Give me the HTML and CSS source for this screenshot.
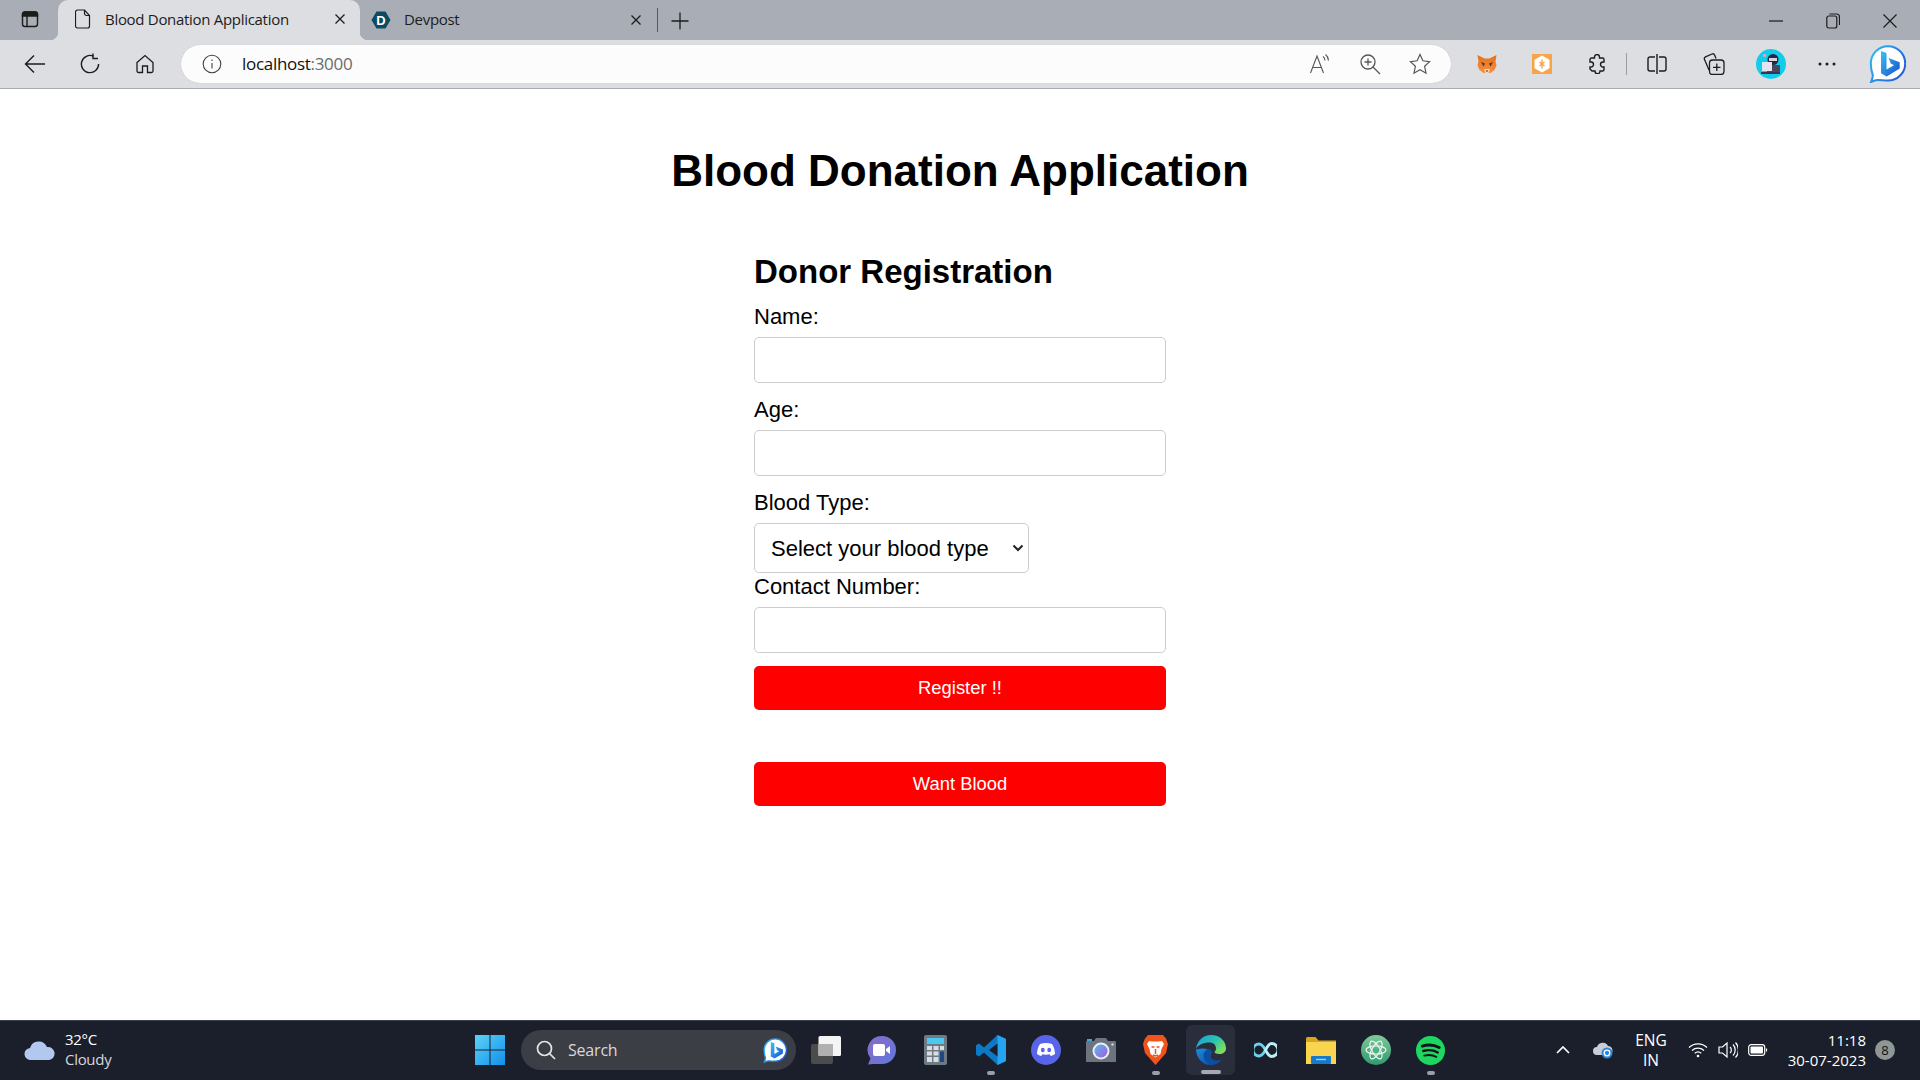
FILE: index.html
```html
<!DOCTYPE html>
<html lang="en">
<head>
  <meta charset="UTF-8">
  <meta name="viewport" content="width=device-width, initial-scale=1.0">
  <title>Blood Donation Application</title>
  <link rel="stylesheet" href="styles.css">
</head>
<body>
  <!-- shared icon parts -->
  <svg class="svg-defs" width="0" height="0">
    <defs>
      <linearGradient id="bing-b" x1="0" y1="0" x2="1" y2="1">
        <stop offset="0" stop-color="#37c3f2"/>
        <stop offset="1" stop-color="#1a4fd0"/>
      </linearGradient>
      <linearGradient id="bing-ring" x1="0" y1="0" x2="1" y2="0.6">
        <stop offset="0" stop-color="#2fc0f5"/>
        <stop offset="1" stop-color="#1f5fdc"/>
      </linearGradient>
      <linearGradient id="chat-bg" x1="0" y1="0" x2="1" y2="1">
        <stop offset="0" stop-color="#8a6cc8"/>
        <stop offset="1" stop-color="#5f78dc"/>
      </linearGradient>
      <linearGradient id="lens-bg" x1="0" y1="0" x2="1" y2="1">
        <stop offset="0" stop-color="#5fb6ee"/>
        <stop offset="1" stop-color="#a05be0"/>
      </linearGradient>
      <linearGradient id="edge-top" x1="0" y1="0" x2="1" y2="0.6">
        <stop offset="0" stop-color="#1b9de2"/>
        <stop offset="0.6" stop-color="#2cc2b0"/>
        <stop offset="1" stop-color="#7fdc5a"/>
      </linearGradient>
      <linearGradient id="edge-low" x1="0" y1="0" x2="1" y2="1">
        <stop offset="0" stop-color="#1a8fe0"/>
        <stop offset="1" stop-color="#0b3f96"/>
      </linearGradient>
      <linearGradient id="atom-bg" x1="0" y1="0" x2="0" y2="1">
        <stop offset="0" stop-color="#7fc99a"/>
        <stop offset="1" stop-color="#2f9a70"/>
      </linearGradient>
      <linearGradient id="win-bg" x1="0" y1="0" x2="1" y2="1">
        <stop offset="0" stop-color="#5ed2f7"/>
        <stop offset="1" stop-color="#1090ea"/>
      </linearGradient>
      <linearGradient id="fox-bg" x1="0" y1="0" x2="0" y2="1">
        <stop offset="0" stop-color="#e2701c"/>
        <stop offset="1" stop-color="#f59042"/>
      </linearGradient>
      <symbol id="bing-logo" viewBox="0 0 37 38">
        <path d="M19 1.200a17.200 17.200 0 0 1 0 34.400c-3.500 0-7.500-.6-10.500-.6-2.500 0-5 1.300-6.500 2 .8-1.800 1.800-4 1.800-6.800C2.500 26.500 1.800 23 1.800 18.400A17.200 17.200 0 0 1 19 1.200z" fill="#fff" stroke="url(#bing-ring)" stroke-width="2"/>
        <path d="M12 6l5.500 2v16.500l7.500-4.300-3.300-1.700-2-5.500 11 4.300v6.200l-13 8-5.700-3.200z" fill="url(#bing-b)"/>
      </symbol>
    </defs>
  </svg>

  <!-- browser tabs -->
  <div class="tab-strip">
    <div class="strip-btn">
      <svg width="20" height="20" viewBox="0 0 20 20" fill="none" stroke="#1c1c1c" stroke-width="1.400"><rect x="2.500" y="3" width="15" height="14.500" rx="2.500"/><path d="M2.500 5.500a2.500 2.500 0 0 1 2.500-2.500h10a2.500 2.500 0 0 1 2.500 2.500V7h-15z" fill="#1c1c1c"/><path d="M7 7v10"/></svg>
    </div>
    <div class="tab active">
      <svg class="tab-icon" width="16" height="20" viewBox="0 0 16 20" fill="none" stroke="#1c1c1c" stroke-width="1.200"><path d="M2.500 1h7l5 5.500v10.500a2 2 0 0 1-2 2h-10a2 2 0 0 1-2-2V3a2 2 0 0 1 2-2z"/><path d="M9.500 1v3.500a2 2 0 0 0 2 2h3"/></svg>
      <span class="tab-title">Blood Donation Application</span>
      <svg class="tab-close" width="12" height="12" viewBox="0 0 12 12" stroke="#1c1c1c" stroke-width="1.300"><path d="M1.500 1.500l9 9M10.500 1.500l-9 9"/></svg>
    </div>
    <div class="tab">
      <svg class="tab-icon" width="20" height="20" viewBox="0 0 20 20"><path d="M5.500 1.500h9L19.500 10l-5 8.500h-9L.5 10z" fill="#0f4a5f"/><text x="10" y="14.500" text-anchor="middle" class="fav-letter">D</text></svg>
      <span class="tab-title">Devpost</span>
      <svg class="tab-close" width="12" height="12" viewBox="0 0 12 12" stroke="#1c1c1c" stroke-width="1.300"><path d="M1.500 1.500l9 9M10.500 1.500l-9 9"/></svg>
    </div>
    <div class="tab-sep"></div>
    <div class="new-tab">
      <svg width="18" height="18" viewBox="0 0 18 18" stroke="#1c1c1c" stroke-width="1.300"><path d="M9 .5v17M.5 9h17"/></svg>
    </div>
    <div class="window-btns">
      <svg width="14" height="14" viewBox="0 0 14 14" stroke="#1c1c1c" stroke-width="1.200"><path d="M0 7h14"/></svg>
      <svg width="14" height="16" viewBox="0 0 14 16" fill="none" stroke="#1c1c1c" stroke-width="1.200"><rect x=".8" y="3" width="10" height="12" rx="2"/><path d="M3.500 1h7a3 3 0 0 1 3 3v8"/></svg>
      <svg width="14" height="14" viewBox="0 0 14 14" stroke="#1c1c1c" stroke-width="1.200"><path d="M.5.5l13 13M13.500.5l-13 13"/></svg>
    </div>
  </div>

  <!-- address bar row -->
  <div class="toolbar">
    <div class="nav-btn">
      <svg width="22" height="20" viewBox="0 0 22 20" fill="none" stroke="#1c1c1c" stroke-width="1.400"><path d="M21 10H2M10 1.500L1.500 10l8.500 8.500"/></svg>
    </div>
    <div class="nav-btn">
      <svg width="20" height="22" viewBox="0 0 20 22" fill="none" stroke="#1c1c1c" stroke-width="1.400"><path d="M13.500 3.200A8.600 8.600 0 1 0 18.600 11"/><path d="M13 .5v5h5"/></svg>
    </div>
    <div class="nav-btn">
      <svg width="20" height="20" viewBox="0 0 20 20" fill="none" stroke="#1c1c1c" stroke-width="1.300"><path d="M2 8.500L10 1.500l8 7V17a1.500 1.500 0 0 1-1.500 1.500h-4V12h-5v6.500h-4A1.500 1.500 0 0 1 2 17z"/></svg>
    </div>
    <div class="address-bar">
      <svg class="info-icon" width="20" height="20" viewBox="0 0 20 20" fill="none" stroke="#444" stroke-width="1.100"><circle cx="10" cy="10" r="8.800"/><path d="M10 9v5.500M10 5.500v1.500"/></svg>
      <span class="url">localhost<span class="url-port">:3000</span></span>
      <div class="address-icons">
        <svg width="22" height="22" viewBox="0 0 22 22" fill="none" stroke="#555" stroke-width="1.100"><path d="M1.500 20L8 3l6.500 17M3.800 14.500h8.500"/><path d="M14 3.500a5 5 0 0 1 2 4M16.500 1.500a8 8 0 0 1 3 6"/></svg>
        <svg width="22" height="22" viewBox="0 0 22 22" fill="none" stroke="#555" stroke-width="1.300"><circle cx="9" cy="9" r="7"/><path d="M14 14l7 7M5.500 9h7M9 5.500v7"/></svg>
        <svg width="22" height="22" viewBox="0 0 22 22" fill="none" stroke="#555" stroke-width="1.200"><path d="M11 1.500l2.900 6.300 6.700.8-5 4.700 1.400 6.900L11 16.800l-6 3.400 1.400-6.900-5-4.700 6.700-.8z"/></svg>
      </div>
    </div>
    <div class="ext-btn">
      <svg width="20" height="20" viewBox="0 0 20 20"><path d="M.5 1l7 3.500h5L19.500 1l-1 6.500 1 4-2 4.500-4 3h-7l-4-3-2-4.500 1-4z" fill="url(#fox-bg)"/><path d="M4 8l4 1.500-1.500 3zM16 8l-4 1.500 1.500 3z" fill="#5c3418"/><path d="M7 15h6l-1.500 4h-3z" fill="#f4d6bb"/><path d="M8.800 16.500h2.400l-1.200 1.500z" fill="#222"/></svg>
    </div>
    <div class="ext-btn">
      <svg width="20" height="20" viewBox="0 0 20 20"><rect width="20" height="20" fill="#f7a548"/><path d="M10 1.500l7.500 4.300v8.400L10 18.500l-7.500-4.300V5.800z" fill="#fff"/><path d="M10 5.500v9M7.500 8l5 4M12.500 8l-5 4" stroke="#f7a548" stroke-width="1.400"/></svg>
    </div>
    <div class="ext-btn">
      <svg width="20" height="20" viewBox="0 0 20 20" fill="none" stroke="#1c1c1c" stroke-width="1.400"><path d="M7.500 3a2.500 2.500 0 0 1 5 0v1h3a1.500 1.500 0 0 1 1.500 1.500V8h-1a2.500 2.500 0 0 0 0 5h1v2.500a1.500 1.500 0 0 1-1.500 1.500H13v.3a2.500 2.500 0 0 1-5 0V17H5l-2-2v-2h1a2.500 2.500 0 0 0 0-5H3V5.500A1.500 1.500 0 0 1 4.500 4h3z"/></svg>
    </div>
    <div class="toolbar-sep"></div>
    <div class="tool-btn">
      <svg width="20" height="20" viewBox="0 0 20 20" fill="none" stroke="#1c1c1c" stroke-width="1.400"><path d="M8 3H3a2 2 0 0 0-2 2v10a2 2 0 0 0 2 2h5M12 3h5a2 2 0 0 1 2 2v10a2 2 0 0 1-2 2h-5M10 0v20"/></svg>
    </div>
    <div class="tool-btn">
      <svg width="22" height="22" viewBox="0 0 22 22" fill="none" stroke="#1c1c1c" stroke-width="1.300"><path d="M6 17L1.500 6.500a2 2 0 0 1 1-2.600L9 1a2 2 0 0 1 2.600 1L13 5.500"/><rect x="6.500" y="7" width="14.500" height="14.500" rx="3"/><path d="M13.800 10.500v7.500M10 14.300h7.500"/></svg>
    </div>
    <div class="tool-btn">
      <svg width="30" height="30" viewBox="0 0 30 30"><circle cx="15" cy="15" r="15" fill="#12cdea"/><circle cx="17" cy="10.500" r="5.500" fill="#2a2540"/><path d="M13 9h8v3h-8z" fill="#d7d3e4"/><path d="M11 16h13v7H11z" fill="#4a4560"/><path d="M6 13h10v9H6z" fill="#e6e3ee"/><path d="M5 23h19v2H5z" fill="#3a3550"/><circle cx="8.500" cy="6.500" r="1.800" fill="#f39ab5"/></svg>
    </div>
    <div class="tool-btn">
      <svg width="18" height="4" viewBox="0 0 18 4" fill="#1c1c1c"><circle cx="2" cy="2" r="1.500"/><circle cx="9" cy="2" r="1.500"/><circle cx="16" cy="2" r="1.500"/></svg>
    </div>
    <div class="bing-btn">
      <svg width="37" height="38"><use href="#bing-logo"/></svg>
    </div>
  </div>

  <!-- page content -->
  <div class="page">
    <h1>Blood Donation Application</h1>
    <div class="form-wrap">
      <h2>Donor Registration</h2>
      <form>
        <label>Name:</label>
        <input type="text">
        <label>Age:</label>
        <input type="text">
        <label>Blood Type:</label>
        <select>
          <option>Select your blood type</option>
        </select>
        <label>Contact Number:</label>
        <input type="text">
        <button type="button" class="red-btn">Register !!</button>
      </form>
      <button type="button" class="red-btn want-btn">Want Blood</button>
    </div>
  </div>

  <!-- windows taskbar -->
  <div class="taskbar">
    <div class="weather">
      <svg width="32" height="20" viewBox="0 0 32 20"><path d="M7 20a6 6 0 0 1-1-12 9 9 0 0 1 17-1 6.500 6.500 0 0 1 2 13z" fill="#b3c8ee"/></svg>
      <div class="weather-text">
        <div class="temp">32°C</div>
        <div>Cloudy</div>
      </div>
    </div>
    <div class="task-icon">
      <svg width="30" height="30" viewBox="0 0 30 30"><path d="M0 0h14.500v14.500H0zM15.500 0H30v14.500H15.500zM0 15.500h14.500V30H0zM15.500 15.500H30V30H15.500z" fill="url(#win-bg)"/></svg>
    </div>
    <div class="search-pill">
      <svg width="20" height="20" viewBox="0 0 20 20" fill="none" stroke="#e6e6e6" stroke-width="1.700"><circle cx="8.500" cy="8.500" r="7"/><path d="M13.500 13.500l5.500 5.500"/></svg>
      <span class="search-text">Search</span>
      <svg class="search-bing" width="24" height="25"><use href="#bing-logo"/></svg>
    </div>

    <div class="task-icon">
      <svg width="30" height="28" viewBox="0 0 30 28"><rect y="8" width="22" height="20" rx="2" fill="#4c4c4c"/><rect x="7.500" y="0" width="22.500" height="20" rx="1.500" fill="#f4f4f4"/><rect x="7.500" y="8" width="14.500" height="12" fill="#b0b0b0"/></svg>
    </div>
    <div class="task-icon">
      <svg width="30" height="30" viewBox="0 0 30 30"><path d="M16 1a14 14 0 0 1 0 28H7l-5 .5 2.500-6A14 14 0 0 1 16 1z" fill="url(#chat-bg)"/><rect x="7" y="9" width="12" height="12" rx="2" fill="#fff"/><path d="M20 14l4-3v8l-4-3z" fill="#fff"/></svg>
    </div>
    <div class="task-icon">
      <svg width="23" height="30" viewBox="0 0 23 30"><rect width="23" height="30" rx="2" fill="#6e7a85"/><rect x="3" y="3" width="17" height="6" fill="#4cc8f0"/><path d="M3 11h5v4H3zM9.500 11h5v4h-5zM16 11h4v4h-4zM3 16.500h5v4H3zM9.500 16.500h5v4h-5zM3 22h5v5H3zM9.500 22h5v5h-5z" fill="#d9dde1"/><rect x="16" y="16.500" width="4" height="10.500" fill="#1c4a80"/></svg>
    </div>
    <div class="task-icon has-dot">
      <svg width="30" height="30" viewBox="0 0 30 30"><path d="M21.500 0L30 4v22l-8.500 4L8 17.500 3 21.500 0 19.800v-9.600L3 8.500l5 4z" fill="#0f78c4"/><path d="M21.500 0L30 4v22l-8.500 4z" fill="#26a4ef"/><path d="M21.500 8.500L13 15l8.500 6.500z" fill="#1b1f2c"/></svg>
    </div>
    <div class="task-icon">
      <svg width="30" height="30" viewBox="0 0 30 30"><circle cx="15" cy="15" r="15" fill="#5865e8"/><path d="M9 9c4-1.400 8-1.400 12 0 2 3 3 6.500 3 10-1.300 1-2.800 1.700-4.300 2.100l-1-1.800c-2.500.6-5 .6-7.400 0l-1 1.800C8.800 20.700 7.300 20 6 19c0-3.500 1-7 3-10z" fill="#fff"/><ellipse cx="11.800" cy="15" rx="1.900" ry="2.200" fill="#5865e8"/><ellipse cx="18.200" cy="15" rx="1.900" ry="2.200" fill="#5865e8"/></svg>
    </div>
    <div class="task-icon">
      <svg width="30" height="24" viewBox="0 0 30 24"><path d="M0 4a1 1 0 0 1 1-1h7l2-3h10l2 3h7a1 1 0 0 1 1 1v20H0z" fill="#6c757d"/><path d="M1 1h5v2H1z" fill="#3fa7e8"/><circle cx="15" cy="13" r="8.500" fill="#e6edf7"/><circle cx="15" cy="13" r="6.500" fill="url(#lens-bg)"/><circle cx="26.500" cy="6.500" r="1.200" fill="#d0d4d8"/></svg>
    </div>
    <div class="task-icon has-dot">
      <svg width="25" height="30" viewBox="0 0 25 30"><path d="M5 0h15l3 3.500L25 9l-2 9-10.500 12L2 18 0 9l2-5.500z" fill="#f0531c"/><path d="M6 6c2 .6 4 .6 6.500.6S17 6.600 19 6l2 3-2.500 5-1 5-5 3.500L7.500 19l-1-5L4 9z" fill="#fff"/><path d="M8.500 12h3M13.500 12h3M12.500 14v5M10 20l2.500 1 2.500-1" fill="none" stroke="#f0531c" stroke-width="1.500"/></svg>
    </div>
    <div class="task-icon edge-active">
      <svg width="30" height="30" viewBox="0 0 30 30"><path d="M0 14C1 6 7 0 15 0c9 0 15 6 15 13.500 0 3.500-3 5.500-6.500 5.500-3 0-5-1-5-2 0-.6 1.500-1 1.500-3.500C20 9.500 17 7.500 13.500 7.500 7 7.500 2 10 0 14z" fill="url(#edge-top)"/><path d="M0 14c0 8 5.500 16 14.500 16 4.500 0 8.500-2 11-5-5 2-11 1-11-4 0-2.500.6-3 1.500-4-3-2.500-7-4-10-3.500-3 .5-5 1.500-6 .5z" fill="url(#edge-low)"/><path d="M14 14c-4 .5-6.500 3-6.500 6.500 0 4 3.500 7.500 7 9 4.500 0 8.500-2 11-5-5 2-11 1-11-4 0-2.500 .5-4 1-5z" fill="#0c4fa0"/></svg>
    </div>
    <div class="task-icon">
      <svg width="23" height="16" viewBox="0 0 23 16" fill="none" stroke-width="2.800"><path d="M11.500 8C9 3.500 7 2 5 2a6 6 0 0 0 0 12c2 0 4-1.500 6.500-6z" stroke="#6ed0ea"/><path d="M11.500 8C14 3 15.500 1.500 17.500 1.500a6.500 6.500 0 0 1 0 13c-2 0-3.500-1.500-6-6.500z" stroke="#bdeff6"/></svg>
    </div>
    <div class="task-icon">
      <svg width="30" height="27" viewBox="0 0 30 27"><path d="M0 1.500A1.500 1.500 0 0 1 1.500 0h8l3 3.500H30V8H0z" fill="#d9a41e"/><path d="M0 5h30v22H0z" fill="#f9d44e"/><rect x="5" y="19" width="20" height="8" rx="1" fill="#1679c9"/><path d="M10 22.500h10" stroke="#9fd2f5" stroke-width="1.400"/></svg>
    </div>
    <div class="task-icon">
      <svg width="30" height="30" viewBox="0 0 30 30" fill="none"><circle cx="15" cy="15" r="15" fill="url(#atom-bg)"/><g stroke="#eef8f2" stroke-width="1.200"><ellipse cx="15" cy="15" rx="10" ry="4" transform="rotate(60 15 15)"/><ellipse cx="15" cy="15" rx="10" ry="4" transform="rotate(-60 15 15)"/><ellipse cx="15" cy="15" rx="10" ry="4"/></g></svg>
    </div>
    <div class="task-icon has-dot">
      <svg width="29" height="29" viewBox="0 0 30 30" fill="none"><circle cx="15" cy="15" r="15" fill="#1ed760"/><g stroke="#10151c" stroke-linecap="round"><path d="M6.500 10.500c6-1.800 12-1.500 17.500 1.500" stroke-width="3"/><path d="M7.500 15.500c5-1.400 10.500-1 15 1.500" stroke-width="2.500"/><path d="M8.500 20.300c4.500-1 8.500-.8 12.500 1.200" stroke-width="2"/></g></svg>
    </div>

    <div class="tray">
      <svg class="tray-chevron" width="14" height="8" viewBox="0 0 14 8" fill="none" stroke="#fff" stroke-width="1.700"><path d="M1 7l6-6 6 6"/></svg>
      <svg class="tray-cloud" width="20" height="18" viewBox="0 0 20 18"><path d="M4 14a4 4 0 0 1 0-8 6 6 0 0 1 11-1 4 4 0 0 1 0 9z" fill="#c9ced6"/><circle cx="14" cy="12" r="5.500" fill="#2b88d8"/><circle cx="14" cy="12" r="2.800" fill="none" stroke="#fff" stroke-width="1.300"/></svg>
      <div class="lang"><div>ENG</div><div>IN</div></div>
      <svg class="tray-wifi" width="20" height="16" viewBox="0 0 20 16" fill="none" stroke="#fff" stroke-width="1.300"><path d="M1 5.500a13 13 0 0 1 18 0M4 8.500a9 9 0 0 1 12 0M6.800 11.200a5 5 0 0 1 6.400 0"/><circle cx="10" cy="14" r="1.300" fill="#fff" stroke="none"/></svg>
      <svg class="tray-vol" width="20" height="18" viewBox="0 0 20 18" fill="none" stroke="#fff" stroke-width="1.200"><path d="M1 6h3.500L9 2v14l-4.500-4H1z"/><path d="M12 6a4 4 0 0 1 0 6M15 3.500a8 8 0 0 1 0 11M17.500 1.500a11 11 0 0 1 0 15"/></svg>
      <svg class="tray-batt" width="20" height="12" viewBox="0 0 20 12" fill="none" stroke="#fff" stroke-width="1.200"><rect x=".7" y=".7" width="16" height="10.600" rx="2.500"/><rect x="2.500" y="2.500" width="12.500" height="7" rx="1" fill="#fff" stroke="none"/><path d="M18.500 4.500v3"/></svg>
      <div class="clock"><div>11:18</div><div>30-07-2023</div></div>
      <div class="notif-badge">8</div>
    </div>
  </div>
</body>
</html>
```

FILE: styles.css
```css
* {
  margin: 0;
  padding: 0;
  box-sizing: border-box;
}

body {
  width: 1920px;
  height: 100vh;
  overflow: hidden;
  display: flex;
  flex-direction: column;
  font-family: 'Liberation Sans', Arial, sans-serif;
  background: #fff;
}

.svg-defs {
  position: absolute;
}

.tab-strip {
  height: 40px;
  background: #a9aeb6;
  display: flex;
  align-items: flex-end;
  flex-shrink: 0;
  font-family: 'Open Sans', sans-serif;
}

.strip-btn {
  width: 58px;
  height: 40px;
  padding: 0 0 2px 2px;
  display: flex;
  align-items: center;
  justify-content: center;
}

.tab {
  width: 296px;
  height: 38px;
  padding: 0 0 3px 11px;
  display: flex;
  align-items: center;
  font-size: 15px;
  letter-spacing: -0.3px;
  color: #1c1c1c;
}

.tab.active {
  width: 302px;
  height: 40px;
  background: #dcdee2;
  border-radius: 10px 10px 0 0;
  padding: 0 0 2px 17px;
  position: relative;
}

.tab.active::before,
.tab.active::after {
  content: '';
  position: absolute;
  bottom: 0;
  width: 8px;
  height: 8px;
}

.tab.active::before {
  left: -8px;
  background: radial-gradient(circle at 0 0, transparent 8px, #dcdee2 8.5px);
}

.tab.active::after {
  right: -8px;
  background: radial-gradient(circle at 100% 0, transparent 8px, #dcdee2 8.5px);
}

.tab-icon {
  flex-shrink: 0;
}

.tab.active .tab-icon {
  margin-right: 14px;
}

.tab-title {
  flex: 1;
  padding-bottom: 1px;
}

.tab .tab-icon {
  margin-right: 13px;
}

.tab .tab-close {
  margin-right: 14px;
}

.fav-letter {
  font-family: 'Liberation Sans', sans-serif;
  font-size: 13px;
  font-weight: bold;
  letter-spacing: 0;
  fill: #fff;
}

.tab-sep {
  width: 1px;
  height: 24px;
  background: #555a60;
  margin: 0 0 8px 1px;
}

.new-tab {
  width: 44px;
  height: 38px;
  display: flex;
  align-items: center;
  justify-content: center;
}

.window-btns {
  margin-left: auto;
  width: 151px;
  height: 38px;
  padding-right: 23px;
  display: flex;
  align-items: center;
  justify-content: space-between;
}

.toolbar {
  height: 49px;
  padding: 5px 0 5px 7px;
  background: #dcdee2;
  border-bottom: 1px solid #a8abb0;
  display: flex;
  align-items: center;
  flex-shrink: 0;
}

.nav-btn {
  width: 55px;
  display: flex;
  justify-content: center;
}

.address-bar {
  width: 1270px;
  height: 38px;
  margin: 0 8px 0 9px;
  background: #fcfcfc;
  border-radius: 19px;
  display: flex;
  align-items: center;
  padding-left: 21px;
  box-shadow: 0 0 1px rgba(0, 0, 0, 0.2);
}

.url {
  margin: 0 0 2px 20px;
  font-family: 'Open Sans', sans-serif;
  font-size: 17px;
  letter-spacing: -0.3px;
  color: #111;
}

.url-port {
  color: #6b6b6b;
}

.address-icons {
  margin-left: auto;
  width: 142px;
  padding-right: 20px;
  display: flex;
  justify-content: space-between;
}

.ext-btn {
  width: 55px;
  display: flex;
  justify-content: center;
}

.toolbar-sep {
  width: 1px;
  height: 22px;
  margin: 0 2px;
  background: #9b9da1;
  flex-shrink: 0;
}

.tool-btn {
  width: 56.7px;
  display: flex;
  justify-content: center;
}

.bing-btn {
  width: 60px;
  margin-left: 2px;
  display: flex;
  justify-content: center;
}

.page {
  flex: 1;
  display: flex;
  flex-direction: column;
  align-items: center;
  background: #fff;
  color: #000;
}

h1 {
  font-size: 44px;
  font-weight: bold;
  margin-top: 56px;
  line-height: 52px;
}

.form-wrap {
  width: 412px;
  margin-top: 55px;
}

h2 {
  font-size: 33px;
  font-weight: bold;
  line-height: 39px;
  margin-bottom: 12px;
}

form {
  display: flex;
  flex-direction: column;
}

label {
  font-size: 22px;
  line-height: 25px;
  margin: 1px 0 8px;
}

input {
  width: 100%;
  height: 46px;
  margin-bottom: 13px;
  border: 1.5px solid #ccc;
  border-radius: 5px;
  background: #fff;
}

select {
  width: 275px;
  height: 50px;
  padding: 0 12px 0 16px;
  font-family: 'Liberation Sans', Arial, sans-serif;
  font-size: 22px;
  color: #000;
  border: 1.5px solid #ccc;
  border-radius: 5px;
  appearance: none;
  background: #fff url("data:image/svg+xml,%3Csvg xmlns='http://www.w3.org/2000/svg' width='12' height='8' viewBox='0 0 12 8'%3E%3Cpath d='M1.500 1.500L6 6l4.500-4.500' fill='none' stroke='%23222' stroke-width='2'/%3E%3C/svg%3E") no-repeat right 4px center;
}

.red-btn {
  width: 100%;
  height: 44px;
  border: 0;
  border-radius: 5px;
  background: #ff0000;
  color: #fff;
  font-family: 'Liberation Sans', Arial, sans-serif;
  font-size: 18.4px;
}

.want-btn {
  margin-top: 52px;
}

.taskbar {
  height: 60px;
  padding-bottom: 1px;
  background: #1b1f2c;
  border-top: 1px solid #3a3e49;
  display: flex;
  align-items: center;
  flex-shrink: 0;
  color: #fff;
  font-family: 'Open Sans', sans-serif;
}

.weather {
  width: 462px;
  padding-left: 24px;
  display: flex;
  align-items: center;
  gap: 9px;
}

.weather-text {
  padding-bottom: 3px;
  font-size: 15px;
  line-height: 20px;
  letter-spacing: -0.3px;
  color: #d5d6d9;
}

.temp {
  color: #fff;
}

.task-icon {
  width: 55px;
  height: 50px;
  flex-shrink: 0;
  display: flex;
  align-items: center;
  justify-content: center;
  position: relative;
}

.has-dot::after {
  content: '';
  position: absolute;
  bottom: 0;
  left: 24px;
  width: 8px;
  height: 4px;
  border-radius: 2px;
  background: #9a9ea6;
}

.edge-active::before {
  content: '';
  position: absolute;
  top: 0;
  bottom: 0;
  left: 3px;
  right: 3px;
  z-index: 0;
  background: #2a2e3c;
  border-radius: 6px;
}

.edge-active::after {
  content: '';
  position: absolute;
  bottom: 1px;
  left: 18px;
  width: 20px;
  height: 4px;
  border-radius: 2px;
  background: #a6aab1;
}

.edge-active svg {
  position: relative;
}

.search-pill {
  width: 275px;
  height: 40px;
  margin: 0 2px 0 4px;
  background: #3c3e46;
  border-radius: 20px;
  display: flex;
  align-items: center;
  padding: 0 9px 0 15px;
  flex-shrink: 0;
}

.search-text {
  margin-left: 12px;
  font-size: 16px;
  letter-spacing: -0.2px;
  color: #d8d8d8;
  flex: 1;
}

.tray {
  flex: 1;
  height: 100%;
  padding-bottom: 1px;
  display: flex;
  align-items: center;
  font-size: 15px;
}

.tray-chevron {
  margin-left: 98px;
}

.tray-cloud {
  margin-left: 23px;
}

.lang {
  width: 50px;
  margin-left: 13px;
  text-align: center;
  font-size: 15.5px;
  line-height: 20px;
}

.tray-wifi {
  margin-left: 12px;
}

.tray-vol {
  margin-left: 10px;
}

.tray-batt {
  margin-left: 10px;
}

.clock {
  width: 98px;
  text-align: right;
  line-height: 20px;
}

.notif-badge {
  width: 20px;
  height: 20px;
  margin-left: 9px;
  border-radius: 50%;
  background: #8f9696;
  color: #111;
  font-size: 13px;
  display: flex;
  align-items: center;
  justify-content: center;
}
```
